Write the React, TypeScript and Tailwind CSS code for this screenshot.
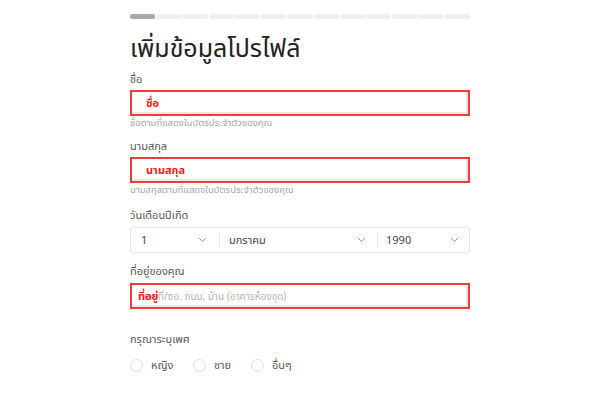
import React, { useState } from 'react';

const font = { fontFamily: '"Noto Sans", "Noto Sans Thai", "Liberation Sans", sans-serif' };

const Chevron: React.FC = () => (
    <svg width="9" height="6" viewBox="0 0 9 6" fill="none" className="text-[#9a9a9a]">
        <path d="M1 1l3.5 3.5L8 1" stroke="currentColor" strokeWidth="1" />
    </svg>
);

const HighlightInput: React.FC<{ tag: string; placeholder?: string }> = ({ tag, placeholder }) => (
    <div className="relative h-[26px] border-2 border-[#f23a3a] bg-white shadow-[inset_-2px_-2px_0_#e9e9e9] flex items-center">
        {placeholder && (
            <span className="absolute left-[12px] text-[10px] text-[#b4b4b4]">{placeholder}</span>
        )}
        <span className={`relative text-[11px] font-bold text-[#f02020] ${placeholder ? 'ml-[6px]' : 'ml-[14px]'}`}>
            {tag}
        </span>
    </div>
);

const Label: React.FC<{ children: React.ReactNode }> = ({ children }) => (
    <div className="text-[11px] leading-[14px] text-[#555]">{children}</div>
);

const Helper: React.FC<{ children: React.ReactNode }> = ({ children }) => (
    <div className="text-[9.5px] leading-[12px] text-[#a5a5a5]">{children}</div>
);

export default function App() {
    const [gender, setGender] = useState('');
    const segments = Array.from({ length: 13 });

    return (
        <div className="w-full h-[400px] bg-white" style={font}>
            <div className="w-[340px] mx-auto pt-[14px] flex flex-col">
                {/* progress */}
                <div className="flex gap-[1px]">
                    {segments.map((_, i) => (
                        <div
                            key={i}
                            className={`flex-1 h-[5px] rounded-[2px] ${i === 0 ? 'bg-[#a9a9a9]' : 'bg-[#efefef]'}`}
                        />
                    ))}
                </div>

                <h1 className="mt-[12px] text-[25px] leading-[32px] text-[#222]">เพิ่มข้อมูลโปรไฟล์</h1>

                <div className="mt-[9px]">
                    <Label>ชื่อ</Label>
                </div>
                <div className="mt-[4px]">
                    <HighlightInput tag="ชื่อ" />
                </div>
                <div className="mt-[1px]">
                    <Helper>ชื่อตามที่แสดงในบัตรประจำตัวของคุณ</Helper>
                </div>

                <div className="mt-[10px]">
                    <Label>นามสกุล</Label>
                </div>
                <div className="mt-[4px]">
                    <HighlightInput tag="นามสกุล" />
                </div>
                <div className="mt-[1px]">
                    <Helper>นามสกุลตามที่แสดงในบัตรประจำตัวของคุณ</Helper>
                </div>

                <div className="mt-[12px]">
                    <Label>วันเดือนปีเกิด</Label>
                </div>
                <div className="mt-[5px] h-[26px] border border-[#e6e6e6] rounded-[3px] flex items-center text-[11px] text-[#444]">
                    <div className="w-[88px] flex items-center justify-between pl-[10px] pr-[12px]">
                        <span>1</span>
                        <Chevron />
                    </div>
                    <div className="w-px h-[14px] bg-[#e6e6e6]" />
                    <div className="w-[157px] flex items-center justify-between pl-[9px] pr-[11px]">
                        <span>มกราคม</span>
                        <Chevron />
                    </div>
                    <div className="w-px h-[14px] bg-[#e6e6e6]" />
                    <div className="flex-1 flex items-center justify-between pl-[8px] pr-[10px]">
                        <span>1990</span>
                        <Chevron />
                    </div>
                </div>

                <div className="mt-[11px]">
                    <Label>ที่อยู่ของคุณ</Label>
                </div>
                <div className="mt-[5px]">
                    <HighlightInput tag="ที่อยู่" placeholder="เลขที่/ซอ. ถนน, บ้าน (อาคารห้องชุด)" />
                </div>

                <div className="mt-[23px]">
                    <Label>กรุณาระบุเพศ</Label>
                </div>
                <div className="mt-[11px] flex items-center text-[11px] text-[#555]">
                    {[
                        { v: 'f', t: 'หญิง', w: 'w-[63px]' },
                        { v: 'm', t: 'ชาย', w: 'w-[58px]' },
                        { v: 'o', t: 'อื่นๆ', w: 'w-[60px]' },
                    ].map((o) => (
                        <label key={o.v} className={`${o.w} flex items-center gap-[8px] cursor-pointer`}>
                            <span
                                onClick={() => setGender(o.v)}
                                className={`w-[13px] h-[13px] rounded-full border ${gender === o.v ? 'border-[#f02020]' : 'border-[#dcdcdc]'}`}
                            />
                            <span>{o.t}</span>
                        </label>
                    ))}
                </div>
            </div>
        </div>
    );
}
